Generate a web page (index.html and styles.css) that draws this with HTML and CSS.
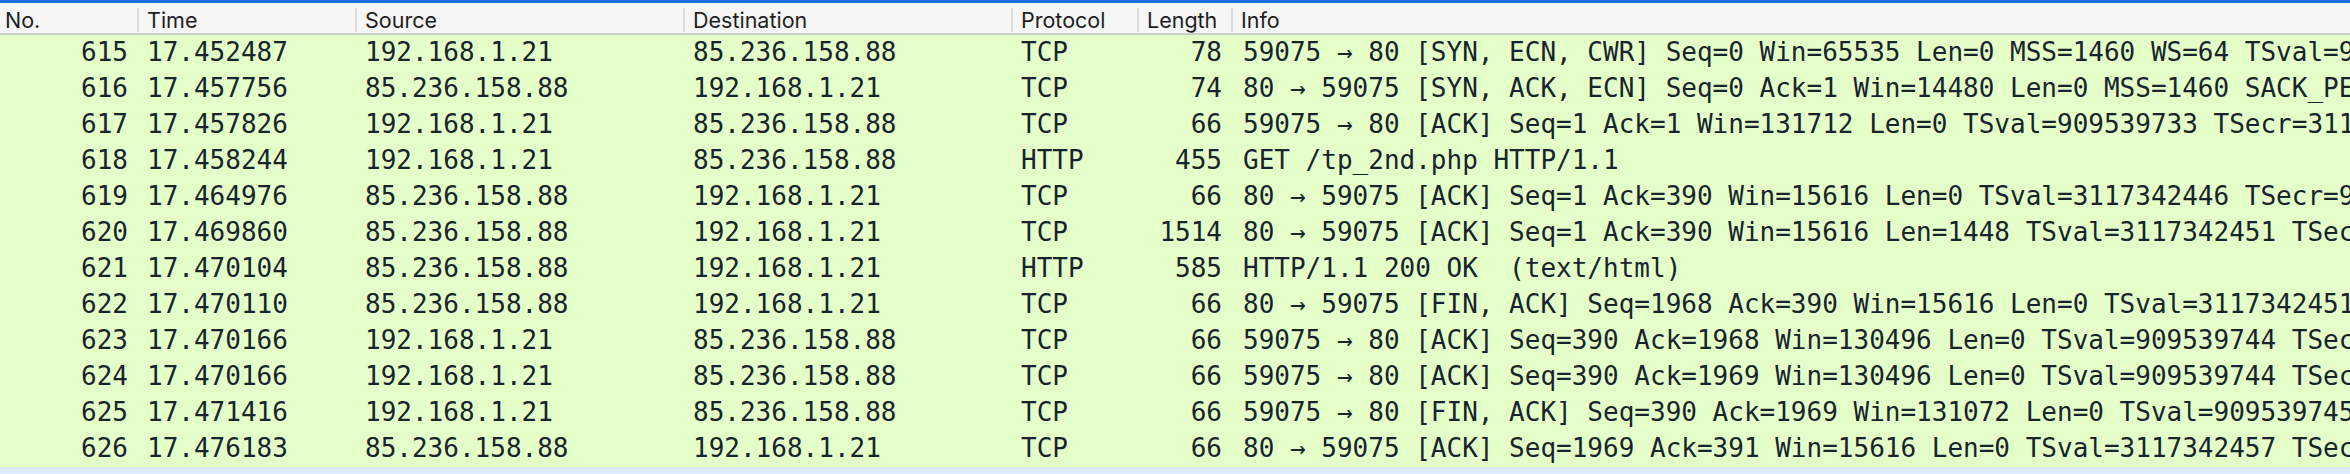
FILE: index.html
```html
<!DOCTYPE html>
<html>
<head>
<meta charset="utf-8">
<link rel="stylesheet" href="styles.css">
</head>
<body>
<div class="pane">
  <div class="accent"></div>
  <div class="head">
    <div class="hc first">No.</div>
    <div class="hc">Time</div>
    <div class="hc">Source</div>
    <div class="hc">Destination</div>
    <div class="hc">Protocol</div>
    <div class="hc">Length</div>
    <div class="hc">Info</div>
  </div>
  <div class="rows">
    <div class="row"><span class="c r">615</span><span class="c">17.452487</span><span class="c">192.168.1.21</span><span class="c">85.236.158.88</span><span class="c">TCP</span><span class="c r">78</span><span class="c info">59075 → 80 [SYN, ECN, CWR] Seq=0 Win=65535 Len=0 MSS=1460 WS=64 TSval=909539709 TSecr=0 SACK_PERM=1</span></div>
    <div class="row"><span class="c r">616</span><span class="c">17.457756</span><span class="c">85.236.158.88</span><span class="c">192.168.1.21</span><span class="c">TCP</span><span class="c r">74</span><span class="c info">80 → 59075 [SYN, ACK, ECN] Seq=0 Ack=1 Win=14480 Len=0 MSS=1460 SACK_PERM=1 TSval=3117342440 TSecr=909539709 WS=128</span></div>
    <div class="row"><span class="c r">617</span><span class="c">17.457826</span><span class="c">192.168.1.21</span><span class="c">85.236.158.88</span><span class="c">TCP</span><span class="c r">66</span><span class="c info">59075 → 80 [ACK] Seq=1 Ack=1 Win=131712 Len=0 TSval=909539733 TSecr=3117342440</span></div>
    <div class="row"><span class="c r">618</span><span class="c">17.458244</span><span class="c">192.168.1.21</span><span class="c">85.236.158.88</span><span class="c">HTTP</span><span class="c r">455</span><span class="c info">GET /tp_2nd.php HTTP/1.1 </span></div>
    <div class="row"><span class="c r">619</span><span class="c">17.464976</span><span class="c">85.236.158.88</span><span class="c">192.168.1.21</span><span class="c">TCP</span><span class="c r">66</span><span class="c info">80 → 59075 [ACK] Seq=1 Ack=390 Win=15616 Len=0 TSval=3117342446 TSecr=909539733</span></div>
    <div class="row"><span class="c r">620</span><span class="c">17.469860</span><span class="c">85.236.158.88</span><span class="c">192.168.1.21</span><span class="c">TCP</span><span class="c r">1514</span><span class="c info">80 → 59075 [ACK] Seq=1 Ack=390 Win=15616 Len=1448 TSval=3117342451 TSecr=909539733 [TCP segment of a reassembled PDU]</span></div>
    <div class="row"><span class="c r">621</span><span class="c">17.470104</span><span class="c">85.236.158.88</span><span class="c">192.168.1.21</span><span class="c">HTTP</span><span class="c r">585</span><span class="c info">HTTP/1.1 200 OK  (text/html)</span></div>
    <div class="row"><span class="c r">622</span><span class="c">17.470110</span><span class="c">85.236.158.88</span><span class="c">192.168.1.21</span><span class="c">TCP</span><span class="c r">66</span><span class="c info">80 → 59075 [FIN, ACK] Seq=1968 Ack=390 Win=15616 Len=0 TSval=3117342451 TSecr=909539733</span></div>
    <div class="row"><span class="c r">623</span><span class="c">17.470166</span><span class="c">192.168.1.21</span><span class="c">85.236.158.88</span><span class="c">TCP</span><span class="c r">66</span><span class="c info">59075 → 80 [ACK] Seq=390 Ack=1968 Win=130496 Len=0 TSval=909539744 TSecr=3117342451</span></div>
    <div class="row"><span class="c r">624</span><span class="c">17.470166</span><span class="c">192.168.1.21</span><span class="c">85.236.158.88</span><span class="c">TCP</span><span class="c r">66</span><span class="c info">59075 → 80 [ACK] Seq=390 Ack=1969 Win=130496 Len=0 TSval=909539744 TSecr=3117342451</span></div>
    <div class="row"><span class="c r">625</span><span class="c">17.471416</span><span class="c">192.168.1.21</span><span class="c">85.236.158.88</span><span class="c">TCP</span><span class="c r">66</span><span class="c info">59075 → 80 [FIN, ACK] Seq=390 Ack=1969 Win=131072 Len=0 TSval=909539745 TSecr=3117342451</span></div>
    <div class="row"><span class="c r">626</span><span class="c">17.476183</span><span class="c">85.236.158.88</span><span class="c">192.168.1.21</span><span class="c">TCP</span><span class="c r">66</span><span class="c info">80 → 59075 [ACK] Seq=1969 Ack=391 Win=15616 Len=0 TSval=3117342457 TSecr=909539745</span></div>
  </div>
</div>
</body>
</html>
```
FILE: styles.css
```css
html, body {
  margin: 0;
  padding: 0;
}
body {
  width: 2350px;
  height: 474px;
  overflow: hidden;
  background: #dcecfe;
}
.pane {
  display: flex;
  flex-direction: column;
}
.accent {
  height: 3px;
  background: #1a6fe6;
}
.head {
  display: grid;
  grid-template-columns: 137px 218px 328px 328px 126px 94px 1fr;
  height: 32px;
  padding-top: 5px;
  box-sizing: border-box;
  background: #f6f6f6;
  border-bottom: 2px solid #cdcdcd;
  font-family: Inter, "Liberation Sans", sans-serif;
  font-size: 21.5px;
  color: #1e1e1e;
}
.hc {
  height: 24px;
  line-height: 24px;
  border-left: 2px solid #dadada;
  padding-left: 8px;
  white-space: nowrap;
}
.hc.first {
  border-left: none;
  padding-left: 5px;
}
.rows {
  display: flex;
  flex-direction: column;
}
.row {
  display: grid;
  grid-template-columns: 137px 218px 328px 328px 126px 94px 1fr;
  height: 36px;
  line-height: 35px;
  background: #e4ffc7;
  font-family: "DejaVu Sans Mono", monospace;
  font-size: 26px;
  color: #17242e;
}
.c {
  padding-left: 10px;
  white-space: pre;
}
.c.r {
  text-align: right;
  padding-left: 0;
  padding-right: 9px;
}
.info {
  padding-left: 12px;
  overflow: hidden;
}
```
